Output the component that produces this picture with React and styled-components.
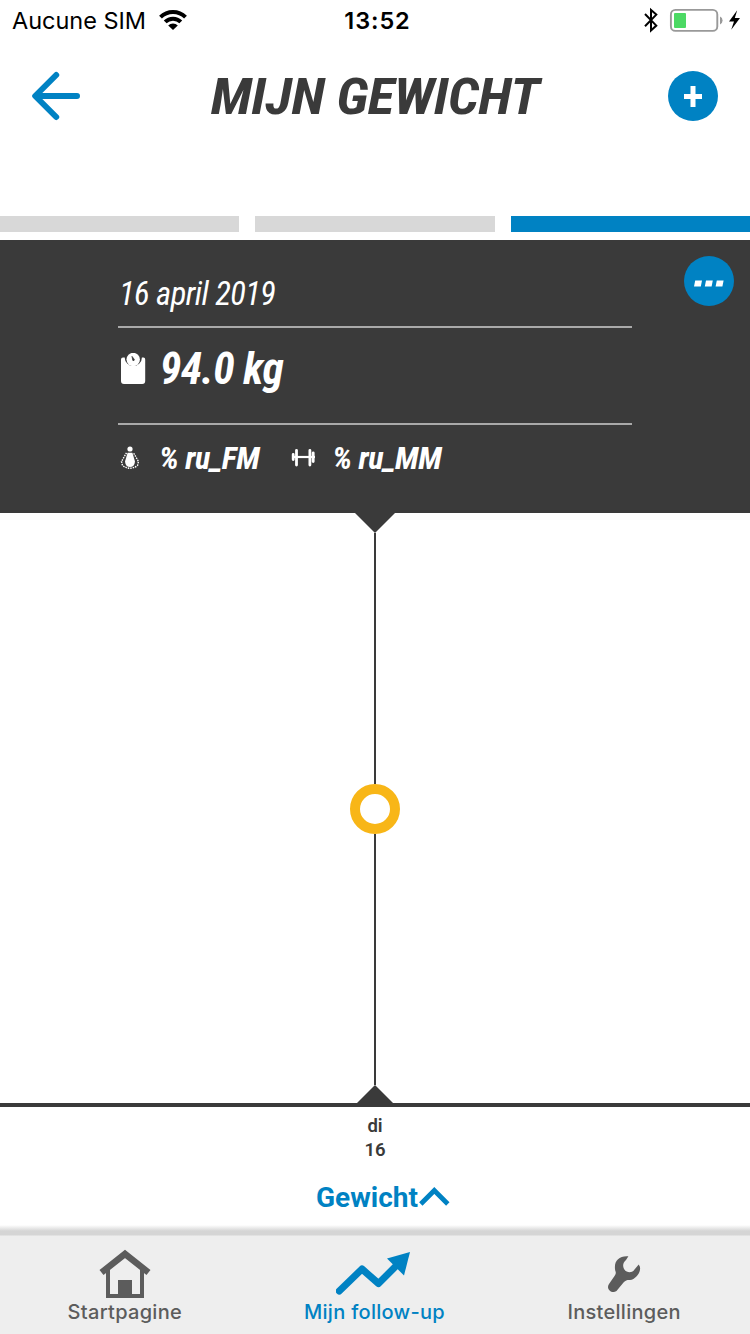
import React from 'react';
import styled, { createGlobalStyle } from 'styled-components';

const blue = '#0082c3';
const dark = '#3a3a3a';
const grey = '#5c5c5c';

export default function App() {
  return (
    <Screen>
      <GlobalStyle />
      <StatusBar>
        <div className='carrier'>
          <StatusText $spacing='-0.03px'>Aucune SIM</StatusText>
          <WifiIcon />
        </div>
        <StatusText className='time' $weight={600} $spacing='0.9px'>
          13:52
        </StatusText>
        <div className='power'>
          <BluetoothIcon />
          <BatteryIcon />
          <BoltIcon />
        </div>
      </StatusBar>

      <Header>
        <BackIcon />
        <Title>MIJN GEWICHT</Title>
        <RoundButton>
          <PlusIcon />
        </RoundButton>
      </Header>

      <Steps>
        <Step />
        <Step />
        <Step $active />
      </Steps>

      <Card>
        <Details>
          <DateRow>16 april 2019</DateRow>
          <WeightRow>
            <ScaleIcon />
            <span>94.0 kg</span>
          </WeightRow>
          <StatsRow>
            <FatIcon />
            <span className='fat'>% ru_FM</span>
            <MuscleIcon />
            <span>% ru_MM</span>
          </StatsRow>
        </Details>
        <MoreButton>
          <DotsIcon />
        </MoreButton>
      </Card>

      <Chart>
        <Pointer width='40' height='20' viewBox='0 0 40 20'>
          <path d='M0 0H40L20 20Z' />
        </Pointer>
        <Line />
        <Ring />
        <Line />
        <Pointer width='36' height='18' viewBox='0 0 36 18'>
          <path d='M0 18H36L18 0Z' />
        </Pointer>
      </Chart>

      <Day>
        <span>di</span>
        <span>16</span>
      </Day>

      <Metric>
        <span>Gewicht</span>
        <ChevronIcon />
      </Metric>

      <TabBar>
        <Tab>
          <HomeIcon />
          <TabLabel>Startpagine</TabLabel>
        </Tab>
        <Tab $active>
          <TrendIcon />
          <TabLabel>Mijn follow-up</TabLabel>
        </Tab>
        <Tab>
          <WrenchIcon />
          <TabLabel>Instellingen</TabLabel>
        </Tab>
      </TabBar>
    </Screen>
  );
}

const WifiIcon = () => (
  <svg width='30' height='22' viewBox='158 9 30 22'>
    <g fill='none' stroke='#000' strokeWidth='4'>
      <path d='M160.5 17.2A17.8 17.8 0 0 1 185.5 17.2' />
      <path d='M165.2 21.9A11 11 0 0 1 180.8 21.9' />
    </g>
    <path d='M168.2 25.4A6.8 6.8 0 0 1 177.8 25.4L173 30Z' />
  </svg>
);

const BluetoothIcon = () => (
  <svg width='16' height='26' viewBox='643 7 16 26'>
    <path
      d='M645 14L656.3 25.6L651 30.5V10L656.3 14.6L645 26.2'
      fill='none'
      stroke='#000'
      strokeWidth='2'
    />
  </svg>
);

const BatteryIcon = () => (
  <svg width='54' height='24' viewBox='669 8 54 24'>
    <rect x='670.9' y='9.9' width='46.4' height='21' rx='4.5' fill='#fff' stroke='#999' strokeWidth='1.9' />
    <rect x='674' y='13' width='12' height='15' rx='1' fill='#4cd964' />
    <path d='M720 16.5A4.4 4.4 0 0 1 720 24.5Z' fill='#999' />
  </svg>
);

const BoltIcon = () => (
  <svg width='12' height='20' viewBox='729 10 12 20'>
    <path d='M737.2 10.2L729 21.6H734L731.2 29.8L740 18H734.8Z' />
  </svg>
);

const BackIcon = () => (
  <svg width='50' height='50' viewBox='31 71 50 50'>
    <path
      d='M56.2 75L35.2 96L56.2 117M36 96H77'
      fill='none'
      stroke={blue}
      strokeWidth='6'
      strokeLinecap='round'
      strokeLinejoin='round'
    />
  </svg>
);

const PlusIcon = () => (
  <svg width='18' height='21' viewBox='0 0 18 21'>
    <path d='M9 0V21M0 10.5H18' stroke='#fff' strokeWidth='5' />
  </svg>
);

const DotsIcon = () => (
  <svg width='30' height='11' viewBox='0 -4 30 11'>
    <path d='M1.2 .5H8L6.8 6.5H0ZM12 .5H18.8L17.6 6.5H10.8ZM22.8 .5H29.6L28.4 6.5H21.6Z' fill='#fff' />
  </svg>
);

const ScaleIcon = () => (
  <svg width='26' height='32' viewBox='120 353 26 32'>
    <path
      d='M123 357.5H124.7A8.6 8.6 0 1 0 141.9 357.5H143.5Q145.2 357.5 145.2 359.5V381Q145.2 384 142.2 384H124Q121 384 121 381V359.5Q121 357.5 123 357.5Z'
      fill='#fff'
    />
    <circle cx='133.2' cy='359.5' r='6.7' fill='#fff' />
    <path d='M132 356.4L134.3 359.4L134 360.6L132.8 360.4Z' fill={dark} stroke={dark} strokeWidth='.8' />
  </svg>
);

const FatIcon = () => (
  <svg width='20' height='24' viewBox='120 446 20 24'>
    <circle cx='130' cy='449' r='2.6' fill='#fff' />
    <path d='M127.6 452.8H132.4L135 461.5Q134.4 467 130 467Q125.6 467 125 461.5Z' fill='#fff' />
    <path
      d='M126.5 452.8L121.5 461.5L122.5 465.5Q130 471 137.5 465.5L138.5 461.5L133.5 452.8'
      fill='none'
      stroke='#fff'
      strokeWidth='1.4'
      strokeDasharray='1.5 1'
    />
  </svg>
);

const MuscleIcon = () => (
  <svg width='24' height='20' viewBox='291 448 24 20'>
    <path
      d='M296.5 450.3V465M309.9 450.3V465M313.2 452.8V461.5M293.2 454.5V459.5'
      stroke='#fff'
      strokeWidth='2.8'
      strokeLinecap='round'
    />
    <path d='M292 457H315' stroke='#fff' strokeWidth='2.2' />
  </svg>
);

const ChevronIcon = () => (
  <svg width='32' height='20' viewBox='417.5 1187 32 20'>
    <path d='M420.3 1204L433.8 1190.5L447.3 1204' fill='none' stroke={blue} strokeWidth='4.8' />
  </svg>
);

const HomeIcon = () => (
  <svg width='54' height='50' viewBox='98 1249 54 50'>
    <path d='M101.5 1272.5L125 1254L148.5 1272.5' fill='none' stroke={grey} strokeWidth='6.5' />
    <path
      d='M106 1270L110 1267V1294H118V1280H132V1294H140V1267L144 1270V1298H106Z'
      fill={grey}
    />
  </svg>
);

const TrendIcon = () => (
  <svg width='76' height='50' viewBox='336 1249 76 50'>
    <path
      d='M339.3 1291L362 1269L378.5 1283.5L399 1263'
      fill='none'
      stroke={blue}
      strokeWidth='7'
      strokeLinecap='round'
      strokeLinejoin='round'
    />
    <path d='M410 1252L404 1275.5L387 1258.5Z' fill={blue} />
  </svg>
);

const WrenchIcon = () => (
  <svg width='34' height='50' viewBox='607 1249 34 50'>
    <path
      d='M628.4 1256.3C619 1255.5 613.5 1261 615.2 1270.5C616.5 1273 615.5 1275 614 1276.8L609 1284C605.5 1289 612 1294.5 616.5 1291L623.5 1282.5C626 1279.8 628 1279.8 630 1280C636 1279.5 641.5 1271.5 639.8 1266.5L638.7 1264.5L634.5 1269.5C632 1273.5 626.5 1272.5 624.8 1270C622 1266 623 1262.5 626 1260Z'
      fill={grey}
    />
  </svg>
);

const GlobalStyle = createGlobalStyle`
  body {
    margin: 0;
    background: #fff;
  }

  * {
    box-sizing: border-box;
  }

  svg {
    display: block;
    flex-shrink: 0;
  }
`;

const Screen = styled.div`
  display: flex;
  flex-direction: column;
  width: 750px;
  height: 1334px;
  overflow: hidden;
  color: ${dark};
  font-family: Roboto, sans-serif;
  white-space: nowrap;
`;

const StatusBar = styled.div`
  display: grid;
  grid-template-columns: 1fr auto 1fr;
  align-items: center;
  height: 40px;
  padding: 0 9px 0 12px;

  .carrier {
    display: flex;
    align-items: center;
    gap: 12px;
  }

  .time {
    padding-left: 2px;
  }

  .power {
    display: flex;
    align-items: center;
    justify-content: flex-end;
    gap: 8px;
  }

  .power svg:first-child {
    margin-right: 2px;
  }

  .power svg:last-child {
    margin-left: -2px;
  }
`;

const StatusText = styled.span`
  padding-top: 2px;
  color: #000;
  font-family: Inter, sans-serif;
  font-size: 23.5px;
  font-weight: ${({ $weight }) => $weight || 400};
  letter-spacing: ${({ $spacing }) => $spacing};
  line-height: 30px;
`;

const Header = styled.header`
  display: grid;
  grid-template-columns: 50px 1fr 50px;
  align-items: center;
  height: 112px;
  padding: 0 32px 0 31px;
`;

const Title = styled.h1`
  margin: 2px 0 0 1px;
  font-size: 50px;
  font-stretch: 75%;
  font-style: italic;
  font-weight: 700;
  letter-spacing: -0.5px;
  line-height: 60px;
  text-align: center;
  transform: scaleX(1.12);
`;

const RoundButton = styled.button`
  display: flex;
  align-items: center;
  justify-content: center;
  width: 50px;
  height: 50px;
  padding: 0;
  border: 0;
  border-radius: 50%;
  background: ${blue};
`;

const Steps = styled.div`
  display: grid;
  grid-template-columns: repeat(3, 1fr);
  gap: 16px;
  height: 88px;
  padding: 64px 0 8px;
`;

const Step = styled.div`
  background: ${({ $active }) => ($active ? blue : '#d8d8d8')};
`;

const Card = styled.section`
  position: relative;
  height: 273px;
  padding: 24px 118px 0;
  background: ${dark};
  color: #fff;
`;

const Details = styled.div`
  font-family: 'Roboto Condensed', Roboto, sans-serif;
  font-stretch: 75%;
  font-style: italic;
`;

const DateRow = styled.div`
  height: 64px;
  padding-left: 1px;
  border-bottom: 2px solid #a9a9a9;
  font-size: 32.5px;
  letter-spacing: -0.5px;
  line-height: 61px;
`;

const WeightRow = styled.div`
  display: flex;
  align-items: flex-start;
  height: 97px;
  padding: 12px 0 0 2px;
  border-bottom: 2px solid #a9a9a9;
  font-size: 43.5px;
  font-weight: 700;
  letter-spacing: -0.6px;
  line-height: 59px;

  svg {
    margin: 13px 14px 0 0;
  }
`;

const StatsRow = styled.div`
  display: flex;
  align-items: center;
  height: 66px;
  padding-left: 2px;
  font-size: 32px;
  font-weight: 700;
  letter-spacing: -0.45px;

  svg {
    margin-right: 18px;
  }

  .fat {
    margin: 0 32px 0 1px;
  }

  .fat + svg {
    margin-right: 17px;
  }
`;

const MoreButton = styled(RoundButton)`
  position: absolute;
  top: 16px;
  right: 16px;
`;

const Chart = styled.section`
  display: flex;
  flex-direction: column;
  align-items: center;
  height: 594px;
  border-bottom: 4px solid ${dark};
`;

const Pointer = styled.svg`
  fill: ${dark};
`;

const Line = styled.div`
  flex: 1;
  width: 2px;
  background: ${dark};
`;

const Ring = styled.div`
  width: 50px;
  height: 50px;
  border: 10px solid #f8b617;
  border-radius: 50%;
`;

const Day = styled.div`
  display: flex;
  flex-direction: column;
  align-items: center;
  height: 66px;
  padding-top: 7px;
  font-size: 18.5px;
  font-weight: 600;
  line-height: 24px;
`;

const Metric = styled.div`
  display: flex;
  align-items: center;
  justify-content: center;
  height: 48px;
  padding-left: 16px;
  color: ${blue};
  font-size: 28px;
  font-weight: 700;
`;

const TabBar = styled.nav`
  display: grid;
  grid-template-columns: repeat(3, 1fr);
  height: 113px;
  padding: 28px 1px 0 0;
  background: linear-gradient(#fff 4px, #d5d5d5 10px, #d5d5d5 14px, #eee 15px);
`;

const Tab = styled.div`
  display: flex;
  flex-direction: column;
  align-items: center;
  color: ${({ $active }) => ($active ? blue : grey)};
`;

const TabLabel = styled.span`
  font-family: Inter, sans-serif;
  font-size: 20px;
  font-weight: 450;
  letter-spacing: 0.3px;
  line-height: 26px;
`;
